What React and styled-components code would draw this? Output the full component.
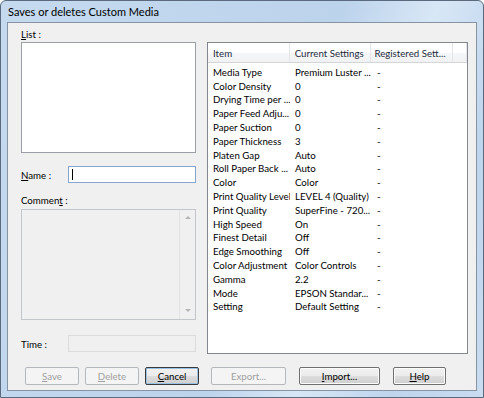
import styled, { createGlobalStyle } from "styled-components";

const GlobalStyle = createGlobalStyle`
  html, body { margin: 0; padding: 0; background: #fff; }
  body { font-family: Lato, "Liberation Sans", sans-serif; }
`;

const rows = [
  ["Media Type", "Premium Luster ...", "-"],
  ["Color Density", "0", "-"],
  ["Drying Time per ...", "0", "-"],
  ["Paper Feed Adju...", "0", "-"],
  ["Paper Suction", "0", "-"],
  ["Paper Thickness", "3", "-"],
  ["Platen Gap", "Auto", "-"],
  ["Roll Paper Back ...", "Auto", "-"],
  ["Color", "Color", "-"],
  ["Print Quality Level", "LEVEL 4 (Quality)", "-"],
  ["Print Quality", "SuperFine - 720...", "-"],
  ["High Speed", "On", "-"],
  ["Finest Detail", "Off", "-"],
  ["Edge Smoothing", "Off", "-"],
  ["Color Adjustment", "Color Controls", "-"],
  ["Gamma", "2.2", "-"],
  ["Mode", "EPSON Standar...", "-"],
  ["Setting", "Default Setting", "-"],
];

const App = () => {
  return (
    <>
      <GlobalStyle />
      <Window>
        <TitleBar>Saves or deletes Custom Media</TitleBar>
        <Client>
          <Main>
            <LeftPane>
              <Label>
                <u>L</u>ist :
              </Label>
              <ListBox />
              <FieldRow $top={13}>
                <RowLabel>
                  <u>N</u>ame :
                </RowLabel>
                <NameInput>
                  <Caret />
                </NameInput>
              </FieldRow>
              <Label $top={10}>
                Commen<u>t</u> :
              </Label>
              <CommentBox>
                <ScrollTrack>
                  <Arrow $down={false} />
                  <Arrow $down />
                </ScrollTrack>
              </CommentBox>
              <FieldRow $top={15}>
                <RowLabel>Time :</RowLabel>
                <TimeField />
              </FieldRow>
            </LeftPane>
            <Table>
              <HeaderRow>
                <HeadCell $w={82}>Item</HeadCell>
                <HeadCell $w={82}>Current Settings</HeadCell>
                <HeadCell $w={82} $pad={3}>Registered Sett...</HeadCell>
                <HeadCell $w={14} />
              </HeaderRow>
              {rows.map(([item, cur, reg]) => (
                <Row key={item}>
                  <Cell $w={82}>{item}</Cell>
                  <Cell $w={82}>{cur}</Cell>
                  <Cell $w={82} $pad={5}>{reg}</Cell>
                </Row>
              ))}
            </Table>
          </Main>
          <ButtonBar>
            <ButtonGroup>
              <Button disabled>
                <u>S</u>ave
              </Button>
              <Button disabled>
                <u>D</u>elete
              </Button>
              <Button $default>
                <u>C</u>ancel
              </Button>
            </ButtonGroup>
            <ButtonGroup $gap={13}>
              <Button disabled $w={75}>
                Export...
              </Button>
              <Button $w={81}>
                <u>I</u>mport...
              </Button>
              <Button $w={53}>
                <u>H</u>elp
              </Button>
            </ButtonGroup>
          </ButtonBar>
        </Client>
      </Window>
    </>
  );
};

export default App;

const Window = styled.div`
  width: 484px;
  height: 398px;
  box-sizing: border-box;
  display: flex;
  flex-direction: column;
  padding: 0 6px 6px;
  border: 1px solid #5b6b7d;
  border-radius: 6px 6px 0 0;
  background: linear-gradient(110deg, #c5daef 0%, #bcd3ec 55%, #d8e7f6 70%, #bed5ed 85%, #c9dcf0 100%);
  font-size: 9.7px;
  color: #000;
`;

const TitleBar = styled.div`
  height: 21px;
  display: flex;
  align-items: center;
  padding-left: 1px;
  font-size: 11px;
  color: #000;
`;

const Client = styled.div`
  flex: 1;
  display: flex;
  flex-direction: column;
  background: #f0f0f0;
  border: 1px solid #8593a2;
  padding: 4px 8px 0 13px;
`;

const Main = styled.div`
  display: flex;
  gap: 11px;
`;

const LeftPane = styled.div`
  width: 177px;
  display: flex;
  flex-direction: column;
`;

const Label = styled.div`
  height: 14px;
  line-height: 14px;
  margin-top: ${(p) => p.$top || 0}px;
`;

const ListBox = styled.div`
  margin-top: 1px;
  height: 109px;
  background: #fff;
  border: 1px solid #9a9fa5;
`;

const FieldRow = styled.div`
  display: flex;
  align-items: center;
  margin-top: ${(p) => p.$top}px;
  height: 17px;
`;

const RowLabel = styled.div`
  width: 47px;
`;

const NameInput = styled.div`
  flex: 1;
  height: 15px;
  background: #fff;
  border: 1px solid #86a6cf;
  display: flex;
  align-items: center;
  padding-left: 3px;
`;

const Caret = styled.div`
  width: 1px;
  height: 11px;
  background: #000;
`;

const CommentBox = styled.div`
  margin-top: 2px;
  height: 109px;
  background: #f0f0f0;
  border: 1px solid #c3c6ca;
  display: flex;
  justify-content: flex-end;
`;

const ScrollTrack = styled.div`
  width: 15px;
  border-left: 1px solid #e3e3e3;
  display: flex;
  flex-direction: column;
  justify-content: space-between;
  align-items: center;
  padding: 6px 0 7px;
`;

const Arrow = styled.div`
  width: 0;
  height: 0;
  border-left: 3px solid transparent;
  border-right: 3px solid transparent;
  ${(p) =>
    p.$down
      ? "border-top: 3px solid #b4b4b4;"
      : "border-bottom: 3px solid #b4b4b4;"}
`;

const TimeField = styled.div`
  flex: 1;
  height: 15px;
  background: #f0f0f0;
  border: 1px solid #dcdcdc;
`;

const Table = styled.div`
  width: 259px;
  height: 310px;
  margin-top: 15px;
  background: #fff;
  border: 1px solid #828790;
`;

const HeaderRow = styled.div`
  display: flex;
  height: 19px;
  background: linear-gradient(#ffffff, #ffffff 50%, #f5f6f7 51%, #f1f2f4);
  border-bottom: 1px solid #d5d5d5;
  margin-bottom: 2px;
`;

const HeadCell = styled.div`
  width: ${(p) => p.$w}px;
  box-sizing: border-box;
  padding-left: ${(p) => (p.$pad != null ? p.$pad : 5)}px;
  border-right: 1px solid #e3e5e8;
  display: flex;
  align-items: center;
  color: #1e2d3e;
  white-space: nowrap;
  overflow: hidden;
`;

const Row = styled.div`
  display: flex;
  height: 13.8px;
  align-items: center;
`;

const Cell = styled.div`
  width: ${(p) => p.$w}px;
  box-sizing: border-box;
  padding-left: ${(p) => (p.$pad != null ? p.$pad : 5)}px;
  white-space: nowrap;
  overflow: hidden;
`;

const ButtonBar = styled.div`
  display: flex;
  gap: 12px;
  margin-top: 13px;
  padding-left: 4px;
`;

const ButtonGroup = styled.div`
  display: flex;
  gap: ${(p) => p.$gap || 6}px;
`;

const Button = styled.button`
  width: ${(p) => p.$w || 54}px;
  height: 18px;
  padding: 0;
  font-family: inherit;
  font-size: 9.7px;
  border-radius: 2px;
  color: #000;
  border: 1px solid ${(p) => (p.$default ? "#3a3a3a" : "#707070")};
  background: linear-gradient(#f2f2f2, #ebebeb 50%, #dddddd 51%, #cfcfcf);
  box-shadow: inset 0 0 0 1px ${(p) => (p.$default ? "#9bc1e2" : "#fcfcfc")};

  &:disabled {
    color: #a0a0a0;
    border-color: #b5b8bb;
    background: #f4f4f4;
    box-shadow: none;
  }
`;
